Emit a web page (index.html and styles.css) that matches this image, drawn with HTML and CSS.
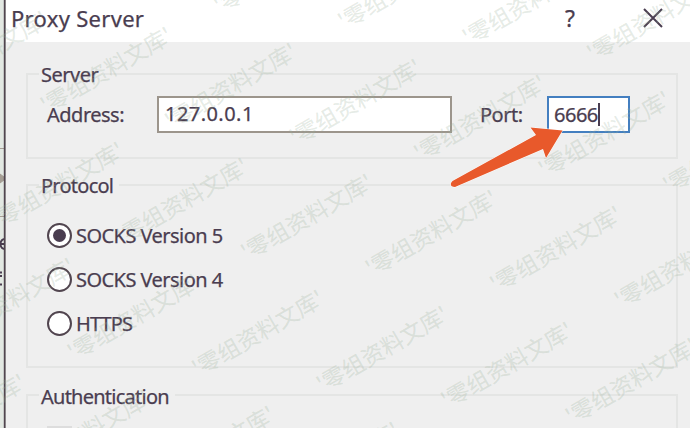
FILE: index.html
```html
<!DOCTYPE html>
<html lang="en">
<head>
<meta charset="utf-8">
<title>Proxy Server</title>
<link rel="stylesheet" href="styles.css">
</head>
<body>
<div class="screen">
  <svg class="edge" viewBox="0 0 6 428">
    <path class="rule" d="M0 148.500H4M0 216.500H4M0 174L4 177V180L0 183Z"/>
    <path class="ink" d="M4 239Q0.500 240 0.500 244T4 249M0 244H4M0 272.500H2M0 276H2M0 284.500H2"/>
    <path class="border" d="M4.700 0V428"/>
  </svg>
  <main class="dialog">
    <header class="titlebar">
      <h1 class="title">Proxy Server</h1>
      <span class="help">?</span>
      <svg class="close" viewBox="0 0 20 20"><path d="M1 1L19 19M19 1L1 19"/></svg>
    </header>
    <div class="content">
      <section class="group server">
        <h2 class="legend"><span>Server</span></h2>
        <div class="fields">
          <span class="label address">Address:</span>
          <div class="input host">127.0.0.1</div>
          <span class="label portlabel">Port:</span>
          <div class="input port">6666<i class="caret"></i></div>
        </div>
      </section>
      <section class="group protocol">
        <h2 class="legend tight"><span>Protocol</span></h2>
        <div class="options">
          <div class="option"><i class="radio on"></i><span>SOCKS Version 5</span></div>
          <div class="option"><i class="radio"></i><span>SOCKS Version 4</span></div>
          <div class="option"><i class="radio"></i><span class="https">HTTPS</span></div>
        </div>
      </section>
      <section class="group auth">
        <h2 class="legend tight"><span>Authentication</span></h2>
        <i class="checkbox"></i>
      </section>
    </div>
  </main>
  <svg class="overlay" viewBox="0 0 690 428">
    <g class="mark">
      <text transform="translate(215.5 1) rotate(-30)" x="-3" y="13.7">'零组资料文库'</text>
      <text transform="translate(340 17) rotate(-30)" x="-3" y="13.7">'零组资料文库'</text>
      <text transform="translate(464.5 33) rotate(-30)" x="-3" y="13.7">'零组资料文库'</text>
      <text transform="translate(589 49) rotate(-30)" x="-3" y="13.7">'零组资料文库'</text>
      <text transform="translate(-82 85) rotate(-30)" x="-3" y="13.7">'零组资料文库'</text>
      <text transform="translate(42.5 101) rotate(-30)" x="-3" y="13.7">'零组资料文库'</text>
      <text transform="translate(167 117) rotate(-30)" x="-3" y="13.7">'零组资料文库'</text>
      <text transform="translate(291.5 133) rotate(-30)" x="-3" y="13.7">'零组资料文库'</text>
      <text transform="translate(416 149) rotate(-30)" x="-3" y="13.7">'零组资料文库'</text>
      <text transform="translate(540.5 165) rotate(-30)" x="-3" y="13.7">'零组资料文库'</text>
      <text transform="translate(665 181) rotate(-30)" x="-3" y="13.7">'零组资料文库'</text>
      <text transform="translate(-6 216) rotate(-30)" x="-3" y="13.7">'零组资料文库'</text>
      <text transform="translate(118.5 232) rotate(-30)" x="-3" y="13.7">'零组资料文库'</text>
      <text transform="translate(243 248) rotate(-30)" x="-3" y="13.7">'零组资料文库'</text>
      <text transform="translate(367.5 264) rotate(-30)" x="-3" y="13.7">'零组资料文库'</text>
      <text transform="translate(492 280) rotate(-30)" x="-3" y="13.7">'零组资料文库'</text>
      <text transform="translate(616.5 296) rotate(-30)" x="-3" y="13.7">'零组资料文库'</text>
      <text transform="translate(-55 332) rotate(-30)" x="-3" y="13.7">'零组资料文库'</text>
      <text transform="translate(69.5 348) rotate(-30)" x="-3" y="13.7">'零组资料文库'</text>
      <text transform="translate(194 364) rotate(-30)" x="-3" y="13.7">'零组资料文库'</text>
      <text transform="translate(318.5 380) rotate(-30)" x="-3" y="13.7">'零组资料文库'</text>
      <text transform="translate(443 396) rotate(-30)" x="-3" y="13.7">'零组资料文库'</text>
      <text transform="translate(567.5 412) rotate(-30)" x="-3" y="13.7">'零组资料文库'</text>
      <text transform="translate(-104 448) rotate(-30)" x="-3" y="13.7">'零组资料文库'</text>
      <text transform="translate(20.5 464) rotate(-30)" x="-3" y="13.7">'零组资料文库'</text>
      <text transform="translate(145 480) rotate(-30)" x="-3" y="13.7">'零组资料文库'</text>
      <text transform="translate(269.5 496) rotate(-30)" x="-3" y="13.7">'零组资料文库'</text>
    </g>
    <path class="arrow" d="M452.500 181L536 135L530.500 127.500L562.500 130.500L546 158L543 149L455 187Q450 187 451 183Z"/>
  </svg>
</div>
</body>
</html>
```
FILE: styles.css
```css
* { box-sizing: border-box; }
body { margin: 0; font-family: "Noto Sans", "Noto Sans CJK SC", sans-serif; color: #4a3d50; }
.screen { position: relative; width: 690px; height: 428px; overflow: hidden; display: flex; background: #efefef; -webkit-text-stroke: 0.25px #4a3d50; }
.edge { flex: none; width: 6px; height: 428px; background: #e2e8e2; fill: none; stroke-width: 2; }
.rule { stroke: #a59e94; fill: #a59e94; stroke-width: 1; }
.ink { stroke: #4a3d50; }
.border { stroke: #51454f; stroke-width: 1.8; }
.dialog { flex: 1; min-width: 0; }
.titlebar { height: 42px; background: #fff; display: flex; align-items: center; padding: 0 27px 6px 5px; }
.title { margin: 0; flex: 1; font-size: 22px; font-weight: 400; line-height: 30px; letter-spacing: 0.3px; white-space: nowrap; }
.help { font-size: 23px; line-height: 30px; font-weight: 400; margin-right: 68px; }
.close { width: 20px; height: 20px; fill: none; stroke: #4a3d50; stroke-width: 2; }
.content { padding: 20px 0 0 20px; }
.group { width: 652px; border: 2px solid #e4e5e4; margin-top: 11px; }
.server { height: 86px; }
.protocol { height: 184px; margin-top: 25px; }
.auth { height: 60px; margin-top: 26px; }
.legend { margin: -14px 0 0 11px; font-size: 20px; font-weight: 400; line-height: 28px; height: 28px; letter-spacing: -0.5px; }
.legend span { display: inline-block; background: #efefef; padding: 0 6px 0 2px; }
.tight { letter-spacing: -0.75px; }
.auth .legend { margin-top: -13px; }
.fields { display: flex; align-items: center; height: 50px; padding-left: 19px; }
.label { font-size: 20px; white-space: nowrap; letter-spacing: -0.5px; }
.address { width: 110px; }
.input { height: 37px; background: #fff; border: 2px solid #9c958c; font-size: 20px; line-height: 31px; padding-left: 6px; }
.host { width: 295px; letter-spacing: 0.45px; }
.portlabel { width: 67px; margin-left: 28px; }
.port { width: 83px; border-color: #447fc0; display: flex; align-items: center; padding-left: 5px; letter-spacing: -0.5px; }
.caret { width: 2px; height: 23px; background: #4a3d50; }
.options { padding: 13px 0 0 19px; }
.option { display: flex; align-items: center; height: 44px; font-size: 20px; letter-spacing: -0.55px; white-space: nowrap; }
.https { letter-spacing: -0.9px; }
.radio { flex: none; width: 25px; height: 25px; border: 2px solid #51454f; border-radius: 50%; background: #fff; margin-right: 4px; display: flex; align-items: center; justify-content: center; }
.on::after { content: ""; width: 13px; height: 13px; border-radius: 50%; background: #4a3d50; }
.checkbox { display: block; width: 25px; height: 25px; border: 2px solid #ddd; margin: 15px 0 0 19px; }
.overlay { position: absolute; inset: 0; width: 690px; height: 428px; -webkit-text-stroke: 0; }
.mark { font-family: "Noto Sans CJK SC", sans-serif; font-size: 22.500px; fill: #9bb29b; fill-opacity: 0.25; stroke: #9bb29b; stroke-opacity: 0.06; stroke-width: 0.6; }
.arrow { fill: #e8592b; stroke: #fff; stroke-width: 1; paint-order: stroke; }
```
